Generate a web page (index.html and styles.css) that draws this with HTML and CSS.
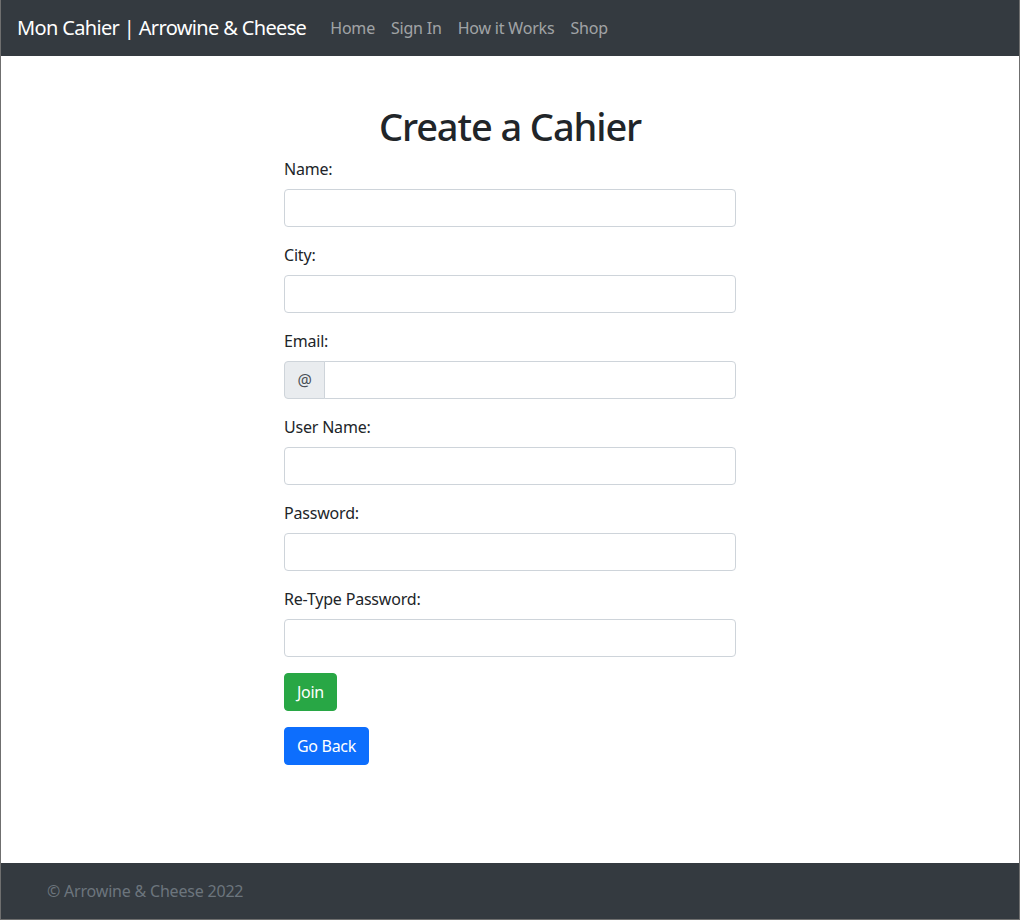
FILE: index.html
```html
<!DOCTYPE html>
<html lang="en">
<head>
<meta charset="utf-8">
<title>Mon Cahier | Arrowine &amp; Cheese</title>
<link rel="stylesheet" href="styles.css">
</head>
<body>
<div class="frame">
  <nav class="navbar">
    <a class="brand" href="#">Mon Cahier | Arrowine &amp; Cheese</a>
    <ul class="nav">
      <li><a href="#">Home</a></li>
      <li><a href="#">Sign In</a></li>
      <li><a href="#">How it Works</a></li>
      <li><a href="#">Shop</a></li>
    </ul>
  </nav>
  <main class="main">
    <div class="form-wrap">
      <h1 class="title">Create a Cahier</h1>
      <form class="form">
        <div class="group">
          <label class="label">Name:</label>
          <input class="input" type="text">
        </div>
        <div class="group">
          <label class="label">City:</label>
          <input class="input" type="text">
        </div>
        <div class="group">
          <label class="label">Email:</label>
          <div class="input-group">
            <span class="addon">@</span>
            <input class="input joined" type="text">
          </div>
        </div>
        <div class="group">
          <label class="label">User Name:</label>
          <input class="input" type="text">
        </div>
        <div class="group">
          <label class="label">Password:</label>
          <input class="input" type="password">
        </div>
        <div class="group">
          <label class="label">Re-Type Password:</label>
          <input class="input" type="password">
        </div>
        <div class="group">
          <button class="btn btn-success" type="button">Join</button>
        </div>
        <div class="group">
          <button class="btn btn-primary" type="button">Go Back</button>
        </div>
      </form>
    </div>
  </main>
  <footer class="footer">
    <span>&copy; Arrowine &amp; Cheese 2022</span>
  </footer>
</div>
</body>
</html>
```
FILE: styles.css
```css
* { box-sizing: border-box; }
html, body { margin: 0; padding: 0; }
body {
  font-family: "Noto Sans", "Open Sans", sans-serif;
  font-size: 16px;
  line-height: 1.5;
  letter-spacing: -0.2px;
  color: #212529;
  background: #fff;
}
.frame {
  height: 920px;
  display: flex;
  flex-direction: column;
  border-left: 1px solid #6f6f6f;
  border-right: 1px solid #6f6f6f;
  border-bottom: 1px solid #6f6f6f;
}
.navbar {
  height: 56px;
  background: #343a40;
  display: flex;
  align-items: center;
  padding: 0 16px;
}
.brand {
  color: #fff;
  font-size: 20px;
  letter-spacing: -0.65px;
  text-decoration: none;
  margin-right: 16px;
}
.nav {
  list-style: none;
  margin: 0;
  padding: 0;
  display: flex;
}
.nav a {
  display: block;
  padding: 8px;
  color: rgba(255,255,255,.55);
  text-decoration: none;
}
.main {
  flex: 1;
  display: flex;
  justify-content: center;
  padding-top: 46px;
}
.form-wrap { width: 452px; }
.title {
  margin: 0 0 7px;
  text-align: center;
  font-size: 38px;
  font-weight: 500;
  letter-spacing: -1.1px;
  line-height: 48px;
}
.form { margin: 0; }
.group { margin-bottom: 16px; }
.label {
  display: inline-block;
  margin-bottom: 8px;
}
.input {
  display: block;
  width: 100%;
  height: 38px;
  padding: 6px 12px;
  font: inherit;
  color: #212529;
  border: 1px solid #ced4da;
  border-radius: 4px;
  background: #fff;
}
.input-group { display: flex; }
.addon {
  width: 41px;
  height: 38px;
  display: flex;
  align-items: center;
  justify-content: center;
  background: #e9ecef;
  border: 1px solid #ced4da;
  border-radius: 4px 0 0 4px;
  font-size: 16px;
  color: #495057;
}
.input.joined {
  flex: 1;
  margin-left: -1px;
  border-radius: 0 4px 4px 0;
}
.btn {
  height: 38px;
  padding: 6px 12px;
  font: inherit;
  letter-spacing: -0.3px;
  color: #fff;
  border: 1px solid transparent;
  border-radius: 4px;
  cursor: pointer;
}
.btn-success { background: #28a745; border-color: #28a745; }
.btn-primary { background: #0d6efd; border-color: #0d6efd; }
.footer {
  height: 56px;
  background: #343a40;
  display: flex;
  align-items: center;
  padding-left: 46px;
  color: #6c757d;
}
```
